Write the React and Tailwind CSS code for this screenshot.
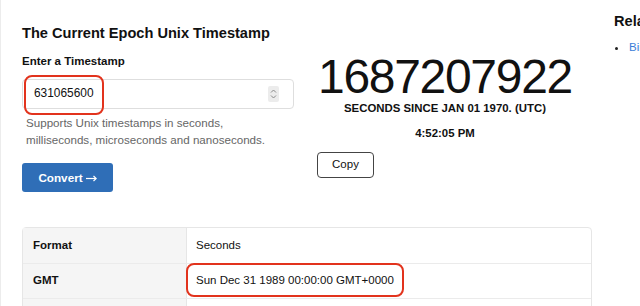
import React from "react";

export default function App() {
  return (
    <div className="w-[640px] h-[306px] overflow-hidden bg-white border-l border-[#ececec] font-['Liberation_Sans',Arial,sans-serif] text-[#111]">
      <div className="flex">
        <main className="ml-[21px] w-[570px] shrink-0">
          <div className="flex">
            <div className="w-[272px] shrink-0">
              <h1 className="mt-[24px] text-[14.6px] leading-[18px] font-bold">The Current Epoch Unix Timestamp</h1>
              <div className="mt-[12px] text-[11.5px] leading-[14px] font-bold">Enter a Timestamp</div>
              <div className="relative mt-[11px] h-[30px] border border-[#dedede] rounded-[4px] flex items-center pl-[11px] pr-[14px]">
                <span className="text-[11.9px] flex-1">631065600</span>
                <div className="w-[11px] h-[16px] bg-[#ececec] rounded-[2px] flex flex-col items-center justify-center">
                  <svg width="7" height="12" viewBox="0 0 7 12" fill="none" stroke="#8a8a8a" strokeWidth="1">
                    <path d="M1 4.5 L3.5 2 L6 4.5" />
                    <path d="M1 7.5 L3.5 10 L6 7.5" />
                  </svg>
                </div>
                <div className="absolute left-[1px] top-[-5px] w-[80px] h-[40px] border-2 border-[#e2331d] rounded-[8px]" />
              </div>
              <p className="mt-[5px] pl-[4px] text-[11.6px] leading-[17px] text-[#666]">
                Supports Unix timestamps in seconds,<br />milliseconds, microseconds and nanoseconds.
              </p>
              <button className="mt-[15px] w-[91px] h-[29px] bg-[#2f6eb7] rounded-[3px] text-white text-[11.7px] font-bold flex items-center justify-center gap-[3px]">
                <span>Convert</span>
                <svg width="11" height="7" viewBox="0 0 11 7" fill="none" stroke="white" strokeWidth="1.2" className="mt-[1px]">
                  <path d="M0 3.5 H10" />
                  <path d="M7.5 1 L10.2 3.5 L7.5 6" />
                </svg>
              </button>
            </div>
            <div className="ml-[24px] flex flex-col items-start">
              <div className="text-center">
                <div className="mt-[53px] text-[48px] leading-[48px] tracking-[-1.3px]">1687207922</div>
                <div className="text-[11.4px] leading-[14px] font-bold">SECONDS SINCE JAN 01 1970. (UTC)</div>
                <div className="mt-[11px] text-[11.4px] leading-[14px] font-bold">4:52:05 PM</div>
              </div>
              <button className="mt-[12px] -ml-[1px] w-[57px] h-[26px] border border-[#444] rounded-[4px] text-[11.5px]">
                Copy
              </button>
            </div>
          </div>
          <div className="mt-[35px] border border-[#e6e6e6] rounded-[4px] text-[11.5px]">
            <div className="flex h-[36px] border-b border-[#ebebeb]">
              <div className="w-[164px] bg-[#f5f5f5] border-r border-[#e6e6e6] flex items-center pl-[10px] font-bold">Format</div>
              <div className="flex-1 flex items-center pl-[9px]">Seconds</div>
            </div>
            <div className="flex h-[35px] border-b border-[#ebebeb]">
              <div className="w-[164px] bg-[#f5f5f5] border-r border-[#e6e6e6] flex items-center pl-[10px] font-bold">GMT</div>
              <div className="flex-1 flex items-center pl-[9px] relative">
                <span>Sun Dec 31 1989 00:00:00 GMT+0000</span>
                <div className="absolute left-[-1px] top-[-1px] w-[218px] h-[34px] border-2 border-[#e2331d] rounded-[8px]" />
              </div>
            </div>
            <div className="flex h-[35px]">
              <div className="w-[164px] bg-[#f5f5f5] border-r border-[#e6e6e6]" />
              <div className="flex-1" />
            </div>
          </div>
        </main>
        <aside className="ml-[22px] shrink-0 w-[200px]">
          <h2 className="mt-[12px] text-[14.6px] leading-[18px] font-bold">Related</h2>
          <div className="mt-[11px] flex items-center h-[14px]">
            <span className="ml-[1px] w-[3px] h-[3px] rounded-full bg-[#222]" />
            <span className="ml-[11px] text-[11.5px] text-[#3b7dd8]">Binary</span>
          </div>
        </aside>
      </div>
    </div>
  );
}
